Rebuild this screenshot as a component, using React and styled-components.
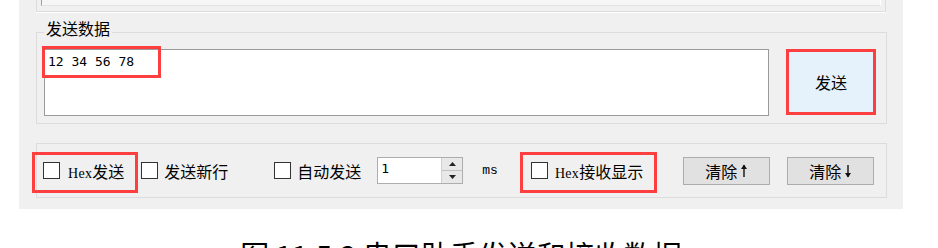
import styled, { createGlobalStyle } from 'styled-components';

const GlobalStyle = createGlobalStyle`
    html, body {
        margin: 0;
        padding: 0;
        background: #ffffff;
    }
    body {
        font-family: "Noto Sans CJK SC", "Noto Sans", sans-serif;
        color: #000;
    }
`;

const red = '#fd3f3f';
const groupLine = '#dcdcdc';

const Page = styled.div`
    width: 938px;
    height: 248px;
    overflow: hidden;
`;

const Panel = styled.div`
    box-sizing: border-box;
    width: 884px;
    height: 209px;
    margin-left: 19px;
    padding: 0 16px 0 17px;
    background: #f0f0f0;
    display: flex;
    flex-direction: column;
`;

const TopStub = styled.div`
    box-sizing: border-box;
    height: 12px;
    margin-right: 1px;
    padding: 0 4px;
    border: 1px solid ${groupLine};
    border-top: none;
    box-shadow: 0 1px 0 #ffffff;
`;

const PrevTextBox = styled.div`
    box-sizing: border-box;
    height: 6px;
    background: #f6f6f6;
    border-left: 1px solid #a0a0a0;
    border-right: 1px solid #ffffff;
    border-bottom: 1px solid #e3e3e3;
`;

const Group = styled.div`
    box-sizing: border-box;
    position: relative;
    margin-top: ${p => p.$top}px;
    height: ${p => p.$height}px;
    border: 1px solid ${groupLine};
    display: flex;
    align-items: ${p => p.$align || 'center'};
    padding: ${p => p.$pad};
`;

const GroupTitle = styled.span`
    position: absolute;
    left: 7px;
    top: -13px;
    padding: 0 2px;
    background: #f0f0f0;
    font-size: 16px;
    line-height: 16px;
`;

const TextBox = styled.div`
    box-sizing: border-box;
    position: relative;
    width: 725px;
    height: 67px;
    background: #ffffff;
    border: 1px solid #9a9a9a;
    padding: 4px 3px;
    font-family: "DejaVu Sans Mono", monospace;
    font-size: 13px;
    line-height: 16px;
`;

const TextMarker = styled.div`
    position: absolute;
    left: -3px;
    top: -4px;
    width: 119px;
    height: 32px;
    box-sizing: border-box;
    border: 3px solid ${red};
`;

const SendButton = styled.button`
    box-sizing: border-box;
    margin-left: auto;
    width: 90px;
    height: 66px;
    background: #e5f1fb;
    border: 3px solid ${red};
    padding: 0;
    font-family: "Noto Sans CJK SC", sans-serif;
    font-size: 16px;
    color: #000;
`;

const CheckItem = styled.label`
    position: relative;
    display: flex;
    align-items: center;
    gap: ${p => p.$gap || 6}px;
    height: 24px;
    margin-left: ${p => p.$ml}px;
    font-size: 16px;
    white-space: nowrap;

    &::after {
        content: '';
        display: ${p => (p.$marked ? 'block' : 'none')};
        position: absolute;
        left: -11px;
        right: -14px;
        top: -7px;
        bottom: -10px;
        border: 3px solid ${red};
    }
`;

const Box = styled.span`
    box-sizing: border-box;
    width: 17px;
    height: 17px;
    background: #ffffff;
    border: 1px solid #333333;
`;

const Hex = styled.span`
    font-family: "Liberation Serif", serif;
    font-size: 14px;
    letter-spacing: 0.3px;
`;

const Spin = styled.div`
    box-sizing: border-box;
    display: flex;
    width: 86px;
    height: 27px;
    margin-left: ${p => p.$ml}px;
    background: #ffffff;
    border: 1px solid #adadad;
`;

const SpinValue = styled.span`
    flex: 1;
    padding: 3px 3px 0;
    font-family: "DejaVu Sans Mono", monospace;
    font-size: 13px;
    line-height: 16px;
`;

const SpinArrows = styled.div`
    width: 20px;
    display: flex;
    flex-direction: column;
    border-left: 1px solid #d0d0d0;
`;

const SpinStep = styled.div`
    flex: 1;
    display: flex;
    align-items: center;
    justify-content: center;
    background: #e8e8e8;
    border-bottom: ${p => (p.$first ? '1px solid #c0c0c0' : 'none')};
`;

const Unit = styled.span`
    margin-left: ${p => p.$ml}px;
    font-family: "Liberation Mono", monospace;
    font-size: 13px;
`;

const ClearButton = styled.button`
    box-sizing: border-box;
    display: flex;
    align-items: center;
    justify-content: center;
    gap: 3px;
    width: 87px;
    height: 28px;
    margin-left: ${p => p.$ml}px;
    padding: 0;
    background: #e1e1e1;
    border: 1px solid #adadad;
    font-family: "Noto Sans CJK SC", sans-serif;
    font-size: 16px;
    line-height: 20px;
    color: #000;
`;

const Caption = styled.div`
    width: 884px;
    margin: 31px 0 0 19px;
    text-align: center;
    font-family: "Noto Sans CJK SC", sans-serif;
    font-size: 29px;
    line-height: 29px;
    white-space: nowrap;
`;

const Triangle = ({ up }) => (
    <svg width="7" height="4" viewBox="0 0 7 4">
        <path d={up ? 'M0 4 L3.5 0 L7 4 Z' : 'M0 0 L3.5 4 L7 0 Z'} fill="#222" />
    </svg>
);

const Arrow = ({ up }) => (
    <svg width="8" height="14" viewBox="0 0 8 14">
        <path d="M4 1 V13" stroke="#111" strokeWidth="1.4" fill="none" />
        <path d={up ? 'M1 5 L4 0.5 L7 5 Z' : 'M1 9 L4 13.5 L7 9 Z'} fill="#111" />
    </svg>
);

export default function App() {
    return (
        <Page>
            <GlobalStyle />
            <Panel>
                <TopStub>
                    <PrevTextBox />
                </TopStub>

                <Group $top={20} $height={92} $align="flex-start" $pad="16px 10px 0 7px">
                    <GroupTitle>发送数据</GroupTitle>
                    <TextBox>
                        12 34 56 78
                        <TextMarker />
                    </TextBox>
                    <SendButton>发送</SendButton>
                </Group>

                <Group $top={19} $height={55} $pad="0 0 0 6px">
                    <CheckItem $ml={0} $gap={8} $marked>
                        <Box />
                        <span><Hex>Hex</Hex>发送</span>
                    </CheckItem>
                    <CheckItem $ml={17}>
                        <Box />
                        <span>发送新行</span>
                    </CheckItem>
                    <CheckItem $ml={46}>
                        <Box />
                        <span>自动发送</span>
                    </CheckItem>
                    <Spin $ml={16}>
                        <SpinValue>1</SpinValue>
                        <SpinArrows>
                            <SpinStep $first><Triangle up /></SpinStep>
                            <SpinStep><Triangle /></SpinStep>
                        </SpinArrows>
                    </Spin>
                    <Unit $ml={19}>ms</Unit>
                    <CheckItem $ml={33} $gap={7} $marked>
                        <Box />
                        <span><Hex>Hex</Hex>接收显示</span>
                    </CheckItem>
                    <ClearButton $ml={40}>清除<Arrow up /></ClearButton>
                    <ClearButton $ml={17}>清除<Arrow /></ClearButton>
                </Group>
            </Panel>
            <Caption>图 11.5.2 串口助手发送和接收数据</Caption>
        </Page>
    );
}
